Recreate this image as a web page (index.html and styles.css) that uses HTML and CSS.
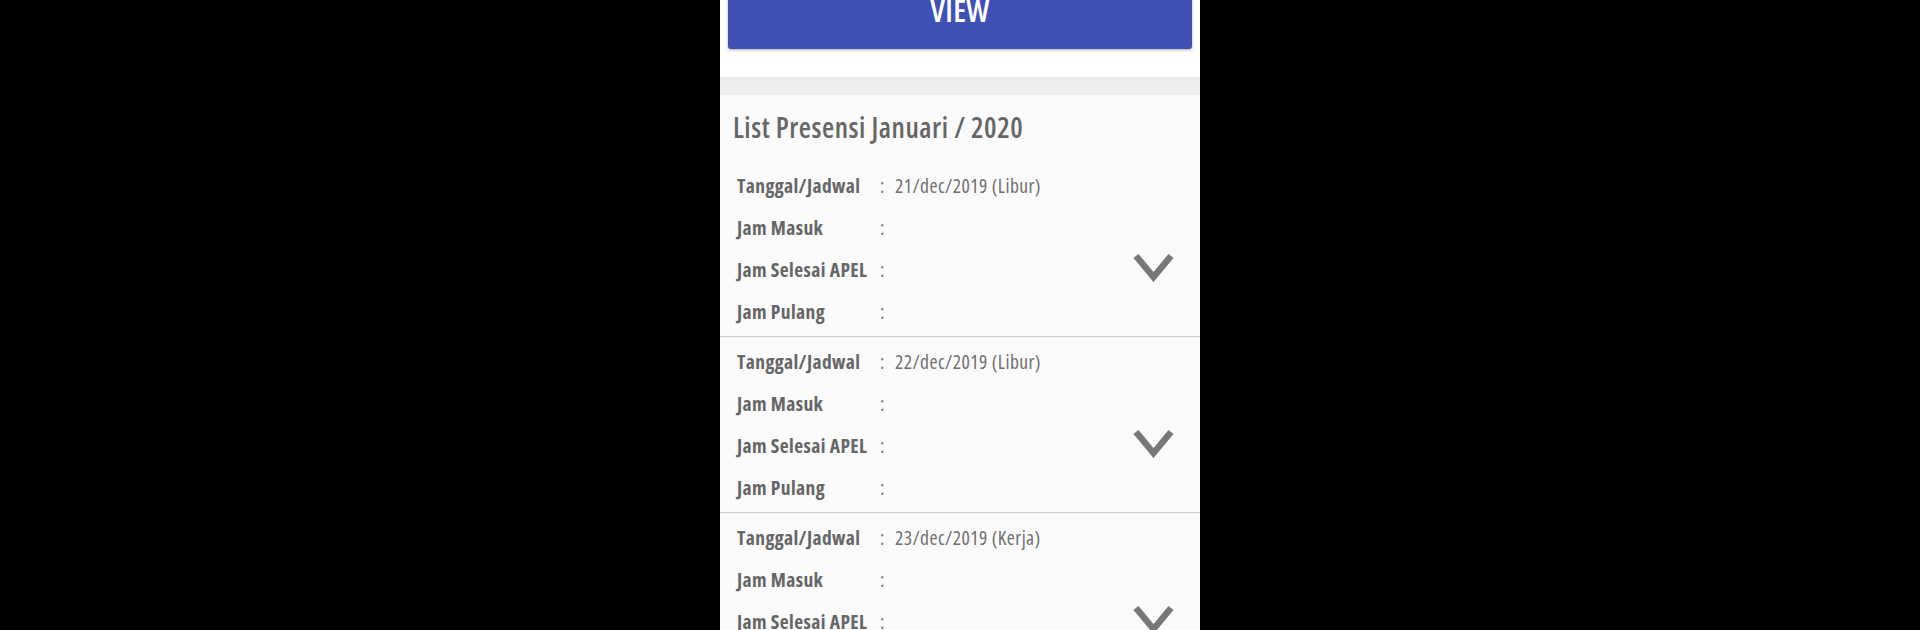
FILE: index.html
```html
<!DOCTYPE html>
<html>
<head>
<meta charset="utf-8">
<link rel="stylesheet" href="styles.css">
</head>
<body>
<div class="screen">
  <div class="top">
    <div class="btn">VIEW</div>
  </div>
  <div class="band"></div>
  <div class="card">
    <div class="title">List Presensi Januari / 2020</div>

    <div class="item">
      <div class="rows">
        <div class="row"><span class="lbl">Tanggal/Jadwal</span><span class="colon">:</span><span class="val">21/dec/2019 (Libur)</span></div>
        <div class="row"><span class="lbl">Jam Masuk</span><span class="colon">:</span><span class="val"></span></div>
        <div class="row"><span class="lbl">Jam Selesai APEL</span><span class="colon">:</span><span class="val"></span></div>
        <div class="row"><span class="lbl">Jam Pulang</span><span class="colon">:</span><span class="val"></span></div>
      </div>
      <svg class="chev" viewBox="0 0 41 29" width="41" height="29"><polyline points="3,3 20.5,24 38,3" fill="none" stroke="#777" stroke-width="6.5"/></svg>
    </div>

    <div class="item">
      <div class="rows">
        <div class="row"><span class="lbl">Tanggal/Jadwal</span><span class="colon">:</span><span class="val">22/dec/2019 (Libur)</span></div>
        <div class="row"><span class="lbl">Jam Masuk</span><span class="colon">:</span><span class="val"></span></div>
        <div class="row"><span class="lbl">Jam Selesai APEL</span><span class="colon">:</span><span class="val"></span></div>
        <div class="row"><span class="lbl">Jam Pulang</span><span class="colon">:</span><span class="val"></span></div>
      </div>
      <svg class="chev" viewBox="0 0 41 29" width="41" height="29"><polyline points="3,3 20.5,24 38,3" fill="none" stroke="#777" stroke-width="6.5"/></svg>
    </div>

    <div class="item">
      <div class="rows">
        <div class="row"><span class="lbl">Tanggal/Jadwal</span><span class="colon">:</span><span class="val">23/dec/2019 (Kerja)</span></div>
        <div class="row"><span class="lbl">Jam Masuk</span><span class="colon">:</span><span class="val"></span></div>
        <div class="row"><span class="lbl">Jam Selesai APEL</span><span class="colon">:</span><span class="val"></span></div>
        <div class="row"><span class="lbl">Jam Pulang</span><span class="colon">:</span><span class="val"></span></div>
      </div>
      <svg class="chev" viewBox="0 0 41 29" width="41" height="29"><polyline points="3,3 20.5,24 38,3" fill="none" stroke="#777" stroke-width="6.5"/></svg>
    </div>
  </div>
</div>
</body>
</html>
```

FILE: styles.css
```css
html, body {
  margin: 0;
  padding: 0;
  background: #000;
  height: 630px;
  overflow: hidden;
}
.screen {
  width: 480px;
  height: 630px;
  margin: 0 auto;
  background: #fff;
  overflow: hidden;
  font-family: "Open Sans", "Noto Sans", sans-serif;
}
.top {
  display: flow-root;
  height: 77px;
  padding: 0 8px 0 8px;
}
.btn {
  margin-top: -20px;
  height: 69px;
  background: #3f51b5;
  border-radius: 3px;
  box-shadow: 0 1px 3px rgba(0,0,0,0.35);
  color: #fff;
  font-family: "Open Sans", sans-serif;
  font-stretch: 75%;
  font-weight: 600;
  font-size: 31px;
  display: flex;
  align-items: center;
  justify-content: center;
  padding-bottom: 10px;
  box-sizing: border-box;
  letter-spacing: 0.3px;
}
.band {
  height: 18px;
  background: #eeeeee;
}
.card {
  background: #fafafa;
}
.title {
  height: 66px;
  box-sizing: border-box;
  padding: 14px 0 0 13px;
  font-size: 28px;
  font-stretch: 75%;
  font-weight: 600;
  color: #666;
  line-height: 36px;
  letter-spacing: 0.52px;
}
.item {
  display: flex;
  align-items: center;
  padding: 3px 26px 4px 17px;
  border-bottom: 1px solid #d0d0d0;
}
.rows {
  flex: 1;
}
.row {
  height: 42px;
  display: flex;
  align-items: center;
  font-size: 19.5px;
  font-stretch: 75%;
}
.lbl {
  width: 143px;
  font-weight: 700;
  color: #666;
  white-space: nowrap;
  letter-spacing: 0.4px;
}
.colon {
  width: 15px;
  color: #777;
}
.val {
  color: #6f6f6f;
  letter-spacing: 0.45px;
}
.chev {
  margin-top: 38px;
  flex: none;
}
```
